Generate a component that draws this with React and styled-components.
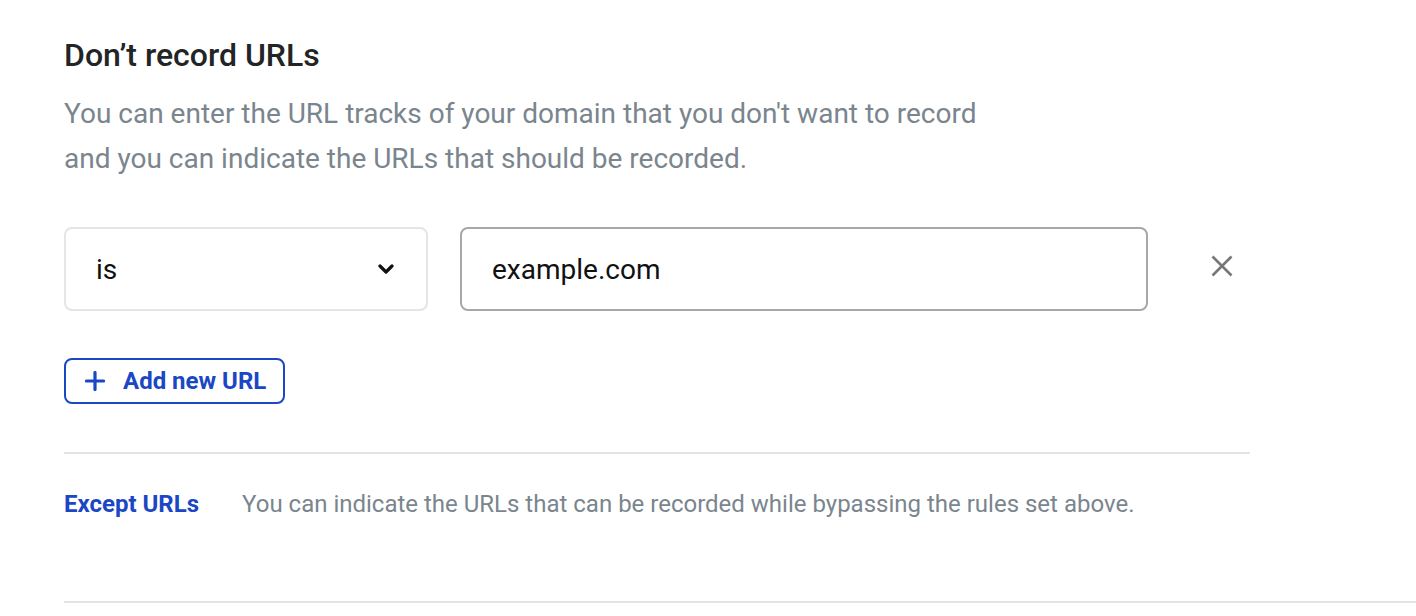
import React, {useState} from "react";
import styled, {createGlobalStyle} from "styled-components";

const GlobalStyle = createGlobalStyle`
  body {
    margin: 0;
    background: #ffffff;
    font-family: Roboto, "Liberation Sans", Arial, sans-serif;
  }
`;

const Page = styled.div`
  padding-left: 64px;
  padding-top: 36px;
`;

const Section = styled.div`
  width: 1186px;
`;

const Title = styled.h2`
  margin: 0;
  font-size: 32px;
  line-height: 38px;
  font-weight: 500;
  color: #222426;
`;

const Description = styled.p`
  margin: 17px 0 0;
  font-size: 28px;
  line-height: 45px;
  color: #7a858e;
  width: 960px;
`;

const RuleRow = styled.div`
  display: flex;
  align-items: center;
  margin-top: 46px;
  gap: 32px;
`;

const SelectBox = styled.div`
  box-sizing: border-box;
  flex-shrink: 0;
  width: 364px;
  height: 84px;
  border: 2px solid #e4e4e9;
  border-radius: 8px;
  display: flex;
  align-items: center;
  justify-content: space-between;
  padding: 0 32px 0 30px;
  font-size: 28px;
  color: #111;
  cursor: pointer;
`;

const UrlInput = styled.input`
  box-sizing: border-box;
  flex-shrink: 0;
  width: 688px;
  height: 84px;
  border: 2px solid #a8a8a8;
  border-radius: 8px;
  padding: 0 30px;
  font-family: inherit;
  font-size: 28px;
  color: #111;
  outline: none;
`;

const RemoveButton = styled.button`
  flex-shrink: 0;
  border: 0;
  background: none;
  padding: 0;
  margin-left: 30px;
  width: 24px;
  height: 24px;
  display: flex;
  align-items: center;
  justify-content: center;
  cursor: pointer;
  transform: translateY(-3px);
`;

const AddButton = styled.button`
  box-sizing: border-box;
  margin-top: 47px;
  height: 46px;
  padding: 0 17px 0 19px;
  display: inline-flex;
  align-items: center;
  gap: 18px;
  border: 2px solid #1b47c5;
  border-radius: 8px;
  background: #fff;
  color: #1b47c5;
  font-family: inherit;
  font-size: 24px;
  font-weight: 700;
  cursor: pointer;
`;

const Divider = styled.hr`
  margin: 48px 0 0;
  border: 0;
  border-top: 2px solid #e3e3e8;
`;

const ExceptRow = styled.div`
  display: flex;
  align-items: center;
  gap: 43px;
  padding: 36px 0 83px;
  margin-right: -166px;
  border-bottom: 2px solid #e3e3e8;
  line-height: 28px;
`;

const ExceptLink = styled.a`
  font-size: 24px;
  font-weight: 700;
  color: #1b47c5;
  cursor: pointer;
`;

const ExceptText = styled.span`
  font-size: 24px;
  color: #7a858e;
`;

const Chevron = () => (
    <svg width="16" height="10" viewBox="0 0 16 10">
        <path d="M2 2 L8 8 L14 2" fill="none" stroke="#111" strokeWidth="3.2"
              strokeLinecap="round" strokeLinejoin="round"/>
    </svg>
);

const CloseIcon = () => (
    <svg width="24" height="24" viewBox="0 0 24 24">
        <path d="M2.5 2.5 L21.5 21.5 M21.5 2.5 L2.5 21.5" stroke="#777" strokeWidth="2.6"/>
    </svg>
);

const PlusIcon = () => (
    <svg width="20" height="20" viewBox="0 0 20 20">
        <path d="M10 1.5 V18.5 M1.5 10 H18.5" stroke="#1b47c5" strokeWidth="3.2" strokeLinecap="round"/>
    </svg>
);

const App = () => {
    const [url, setUrl] = useState("example.com");
    return (
        <Page>
            <GlobalStyle/>
            <Section>
                <Title>Don’t record URLs</Title>
                <Description>
                    You can enter the URL tracks of your domain that you don't want to record
                    and you can indicate the URLs that should be recorded.
                </Description>
                <RuleRow>
                    <SelectBox>
                        <span>is</span>
                        <Chevron/>
                    </SelectBox>
                    <UrlInput value={url} onChange={(e) => setUrl(e.target.value)}/>
                    <RemoveButton aria-label="remove"><CloseIcon/></RemoveButton>
                </RuleRow>
                <AddButton>
                    <PlusIcon/>
                    Add new URL
                </AddButton>
                <Divider/>
                <ExceptRow>
                    <ExceptLink>Except URLs</ExceptLink>
                    <ExceptText>You can indicate the URLs that can be recorded while bypassing the rules set above.</ExceptText>
                </ExceptRow>
            </Section>
        </Page>
    );
};

export default App;
